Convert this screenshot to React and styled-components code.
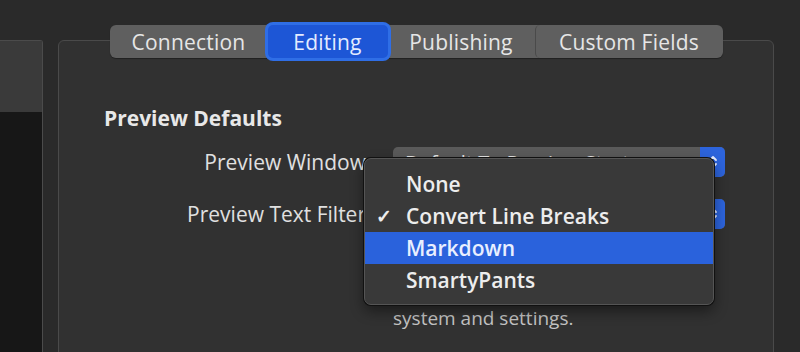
import React from "react";
import styled, { createGlobalStyle } from "styled-components";

const GlobalStyle = createGlobalStyle`
  html, body {
    margin: 0;
    padding: 0;
    background: #2a2a2a;
    font-family: "Open Sans", "Noto Sans", sans-serif;
  }
`;

const Page = styled.div`
  width: 800px;
  height: 352px;
  overflow: hidden;
  display: flex;
  align-items: flex-start;
  background: #2a2a2a;
`;

const Sidebar = styled.div`
  width: 42px;
  height: 320px;
  margin-top: 40px;
  display: flex;
  flex-direction: column;
  border: 1px solid #4b4b4b;
  border-left: none;
  border-bottom: none;
  border-top-right-radius: 3px;
`;

const SidebarHead = styled.div`
  height: 71px;
  background: #3a3a3a;
`;

const SidebarBody = styled.div`
  flex: 1;
  background: #171717;
`;

const Main = styled.div`
  margin-left: 15px;
  width: 716px;
  margin-top: 25px;
  display: flex;
  flex-direction: column;
  align-items: center;
`;

const TabBar = styled.div`
  display: flex;
  align-items: stretch;
  height: 33px;
  margin-bottom: -18px;
  position: relative;
  z-index: 2;
  background: #5f5f5f;
  border-radius: 6px;
  box-shadow: 0 1px 1px rgba(0, 0, 0, 0.35);
`;

const Tab = styled.div`
  width: ${(p) => p.$w}px;
  display: flex;
  align-items: center;
  justify-content: center;
  font-size: 21px;
  font-weight: 500;
  letter-spacing: 0.2px;
  color: ${(p) => (p.$active ? "#e3ebff" : "#e6e6e6")};
  background: ${(p) => (p.$active ? "#1d56d6" : "transparent")};
  border-radius: 5px;
  box-shadow: ${(p) => (p.$active ? "0 0 0 3px #2f6ee6" : "none")};
  border-left: ${(p) => (p.$divider ? "1px solid #4a4a4a" : "none")};
  position: relative;
  z-index: ${(p) => (p.$active ? 1 : 0)};
`;

const Panel = styled.div`
  position: relative;
  width: 100%;
  height: 340px;
  box-sizing: border-box;
  background: #313131;
  border: 1px solid #4a4a4a;
  border-radius: 6px;
  padding: 63px 0 0 45px;
`;

const SectionTitle = styled.div`
  font-size: 21px;
  line-height: 28px;
  font-weight: 700;
  color: #e8e8e8;
  margin-bottom: 15px;
`;

const Form = styled.div`
  display: grid;
  grid-template-columns: 262px 332px;
  column-gap: 27px;
  row-gap: 22px;
  align-items: center;
`;

const Label = styled.div`
  text-align: right;
  font-size: 21px;
  font-weight: 500;
  color: #e0e0e0;
  white-space: nowrap;
`;

const PopupButton = styled.div`
  height: 30px;
  display: flex;
  align-items: center;
  background: #5a5a5a;
  border-radius: 5px;
  overflow: hidden;
  font-size: 20px;
  font-weight: 500;
  color: #e6e6e6;
`;

const PopupText = styled.div`
  flex: 1;
  padding-left: 12px;
  white-space: nowrap;
`;

const PopupArrow = styled.div`
  width: 25px;
  align-self: stretch;
  background: #2d64dc;
  display: flex;
  align-items: center;
  justify-content: center;
`;

const Note = styled.div`
  grid-column: 2;
  font-size: 19px;
  line-height: 29px;
  color: #c4c4c4;
  margin-top: -5px;
  white-space: nowrap;
`;

const Menu = styled.div`
  position: absolute;
  left: 305px;
  top: 117px;
  width: 350px;
  box-sizing: border-box;
  padding: 9px 0 8px;
  background: #393939;
  border: 1px solid #555;
  border-radius: 7px;
  box-shadow: 0 0 0 1px #111, 0 6px 14px rgba(0, 0, 0, 0.45);
  z-index: 5;
`;

const MenuItem = styled.div`
  height: 32px;
  display: flex;
  align-items: center;
  font-size: 21px;
  font-weight: 600;
  color: ${(p) => (p.$hl ? "#e9efff" : "#ededed")};
  background: ${(p) => (p.$hl ? "#2a62dc" : "transparent")};
`;

const Check = styled.span`
  width: 41px;
  padding-left: 11px;
  box-sizing: border-box;
  font-size: 19px;
`;

const Arrows = () => (
  <svg width="12" height="18" viewBox="0 0 12 18">
    <path d="M3 7 L6 4 L9 7 M3 11 L6 14 L9 11" stroke="#e8eeff" strokeWidth="1.8" fill="none" strokeLinecap="round" strokeLinejoin="round" />
  </svg>
);

const tabs = [
  { name: "Connection", w: 158 },
  { name: "Editing", w: 120, active: true },
  { name: "Publishing", w: 147 },
  { name: "Custom Fields", w: 187, divider: true },
];

const items = [
  { name: "None" },
  { name: "Convert Line Breaks", checked: true },
  { name: "Markdown", hl: true },
  { name: "SmartyPants" },
];

export default function App() {
  return (
    <Page>
      <GlobalStyle />
      <Sidebar>
        <SidebarHead />
        <SidebarBody />
      </Sidebar>
      <Main>
        <TabBar>
          {tabs.map((t) => (
            <Tab key={t.name} $w={t.w} $active={t.active} $divider={t.divider}>
              {t.name}
            </Tab>
          ))}
        </TabBar>
        <Panel>
          <SectionTitle>Preview Defaults</SectionTitle>
          <Form>
            <Label>Preview Window</Label>
            <PopupButton>
              <PopupText>Default To Preview Start</PopupText>
              <PopupArrow><Arrows /></PopupArrow>
            </PopupButton>
            <Label>Preview Text Filter</Label>
            <PopupButton>
              <PopupText>Convert Line Breaks</PopupText>
              <PopupArrow><Arrows /></PopupArrow>
            </PopupButton>
            <Note>
              Filter used to format the preview. l
              <br />
              to match your blogging
              <br />
              system and settings.
            </Note>
          </Form>
          <Menu>
            {items.map((i) => (
              <MenuItem key={i.name} $hl={i.hl}>
                <Check>{i.checked ? "✓" : ""}</Check>
                {i.name}
              </MenuItem>
            ))}
          </Menu>
        </Panel>
      </Main>
    </Page>
  );
}
